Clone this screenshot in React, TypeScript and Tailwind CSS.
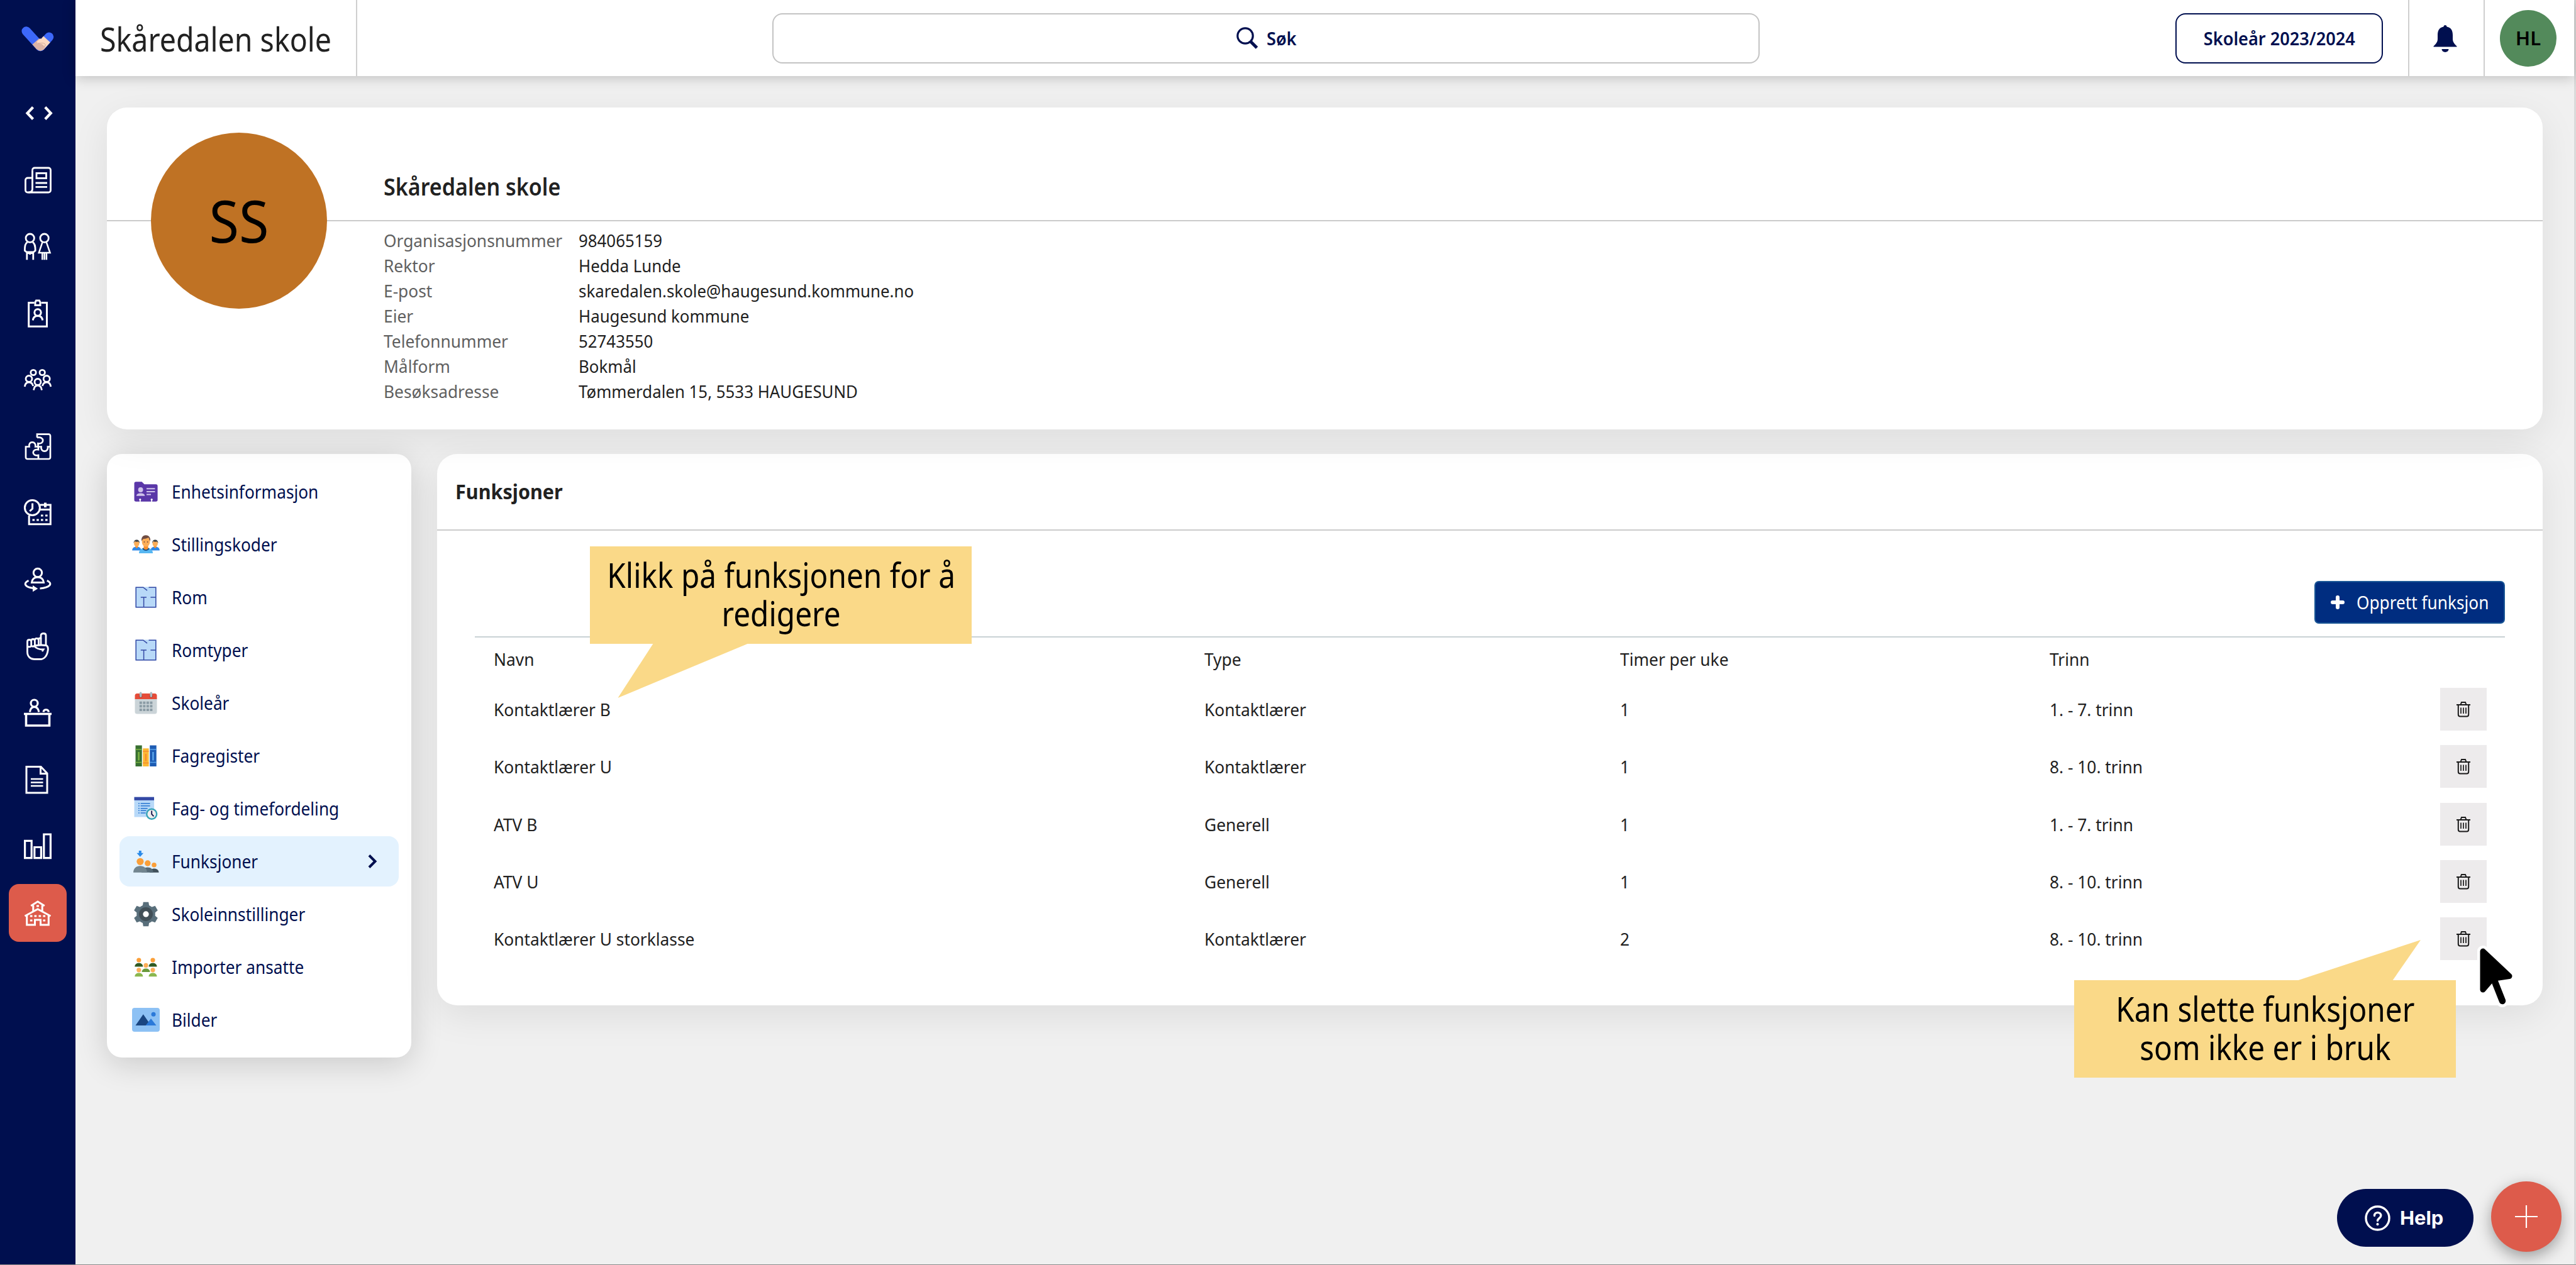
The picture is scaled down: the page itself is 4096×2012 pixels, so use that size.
import React, { ReactNode } from "react";

/* ---------- Sidebar icons (44 × 44 grid, white strokes) ---------- */

function NavSvg({ children, w = 3 }: { children: ReactNode; w?: number }) {
  return (
    <svg
      className="size-11 overflow-visible"
      viewBox="0 0 44 44"
      fill="none"
      stroke="#ffffff"
      strokeWidth={w}
    >
      {children}
    </svg>
  );
}

const navIcons: ReactNode[] = [
  <NavSvg w={4.2}>
    <path d="M14.5 12.5 5.5 22l9 9.500M33.800 12.500l9 9.500-9 9.500" />
  </NavSvg>,
  <NavSvg w={2.8}>
    <path d="M13.500 6.500a3.500 3.500 0 0 1 3.500-3.500h22a3.500 3.500 0 0 1 3.500 3.500v32a3.500 3.500 0 0 1-3.500 3.500H6a3.500 3.500 0 0 1-3.500-3.500V22.500A3.500 3.500 0 0 1 6 19h7.500" />
    <path d="M13.500 6.500v30q0 5.500-6 5.500" />
    <path d="M20 11.500h15.500v8H20zM18.500 27h18.500M18.500 33.300h18.500" />
  </NavSvg>,
  <NavSvg w={2.8}>
    <circle cx="9.700" cy="8.700" r="6.700" />
    <circle cx="32.600" cy="8.700" r="6.700" />
    <path d="M5.500 15.200C2 17.500 1.400 21 1.400 28.500l3 2.500h10.800l3-2.500c0-7.500-.7-11-4.200-13.300M4.800 31v12.300M14.800 31v12.300M9.700 34v1M3.500 32.500h12.500" />
    <path d="M29.500 15.200 23.800 32h17.800l-5.900-16.800M29.300 32v11.300M35.900 32v11.300M32.600 33v10.300" strokeWidth="2.500" />
  </NavSvg>,
  <NavSvg w={3}>
    <path d="M16.500 5.500h-8.800v37.800h28.800V5.500h-8.800" />
    <path d="M18 4.800l1.500-2.800h5l1.500 2.800v4.700h-8z" />
    <circle cx="22" cy="21" r="5.200" />
    <path d="M14.300 33.500c.5-5 3.500-7 7.700-7s7.200 2 7.700 7" />
  </NavSvg>,
  <NavSvg w={2.8}>
    <circle cx="15" cy="10.500" r="4.200" />
    <circle cx="29.200" cy="10.500" r="4.200" />
    <circle cx="8" cy="20.500" r="5" />
    <circle cx="36.200" cy="20.500" r="5" />
    <circle cx="22" cy="25.500" r="5" />
    <path d="M1.300 33c.7-5 3.200-7 6.700-7s5.800 2 6.700 6M42.800 33c-.7-5-3.200-7-6.700-7s-5.800 2-6.700 6M15.500 38.500c.7-5 3-7.500 6.500-7.500s5.800 2.500 6.500 7.500" />
  </NavSvg>,
  <NavSvg w={2.700}>
    <path d="M21 8V2.700h18.500a2.500 2.500 0 0 1 2.500 2.500v34.300a2.500 2.500 0 0 1-2.500 2.500H5.500A2.500 2.500 0 0 1 3 39.500V22.500h5.500c-2-9.500 11.500-9.500 9.800 0h4.700v4.700c-11-2-11 10.800 0 9v5.600" />
    <path d="M21 8c12-2.500 12 11.200 1.500 9.300v5.200h5c-1.500 9.500 12 9.500 10.500 0h4" />
  </NavSvg>,
  <NavSvg w={3}>
    <circle cx="13.400" cy="13.500" r="12" />
    <path d="M13.600 6.500v8.500l-4.300 4" />
    <path d="M26 9h16.300v30.800H8.200V26M26 16.500h16" />
    <path d="M34 5.500v7.500" strokeWidth="4" />
    <path d="M27 26h3.600M34 26h3.600M13.500 33h3.600M20.200 33h3.600M27 33h3.600M34 33h3.600" strokeWidth="3.200" />
  </NavSvg>,
  <NavSvg w={3}>
    <circle cx="22" cy="11" r="6.700" />
    <path d="M12.500 26.500c.8-6 4.500-8.500 9.500-8.500s8.700 2.500 9.500 8.500z" />
    <path d="M7.500 23.300C-2.500 28 2.500 34 15 35.500M36.800 23.300c10 5 4.500 11.200-11.300 12.700" />
    <path d="M14 31v10.300l8.200-5.100z" fill="#ffffff" stroke="none" />
  </NavSvg>,
  <NavSvg w={2.800}>
    <path d="M27 20V4.500C27 .5 35 .5 35 4.500V20c3 1.500 3.800 4 3.200 8C37 37.500 32 42.500 26 42.500h-8.500C10 42.500 5.500 38 5.500 31V14.500c0-4 6.200-4 6.200 0v6.300c0 2.700-6.200 2.700-6.200 0" />
    <path d="M11.700 13.500c0-4 5.700-4 5.700 0v6.500c0 2.500-4 3-5.700 1M17.400 12.500c0-4.200 6-4.200 6 0v6c0 2.500-5 3-6 1M23.400 10.500c1-2 3.600-2 3.600 0" />
    <path d="M35 20.500c-7-1-13-.5-18.500 1 3 4 8 5.500 14.500 5.500l-2 3" />
  </NavSvg>,
  <NavSvg w={3.200}>
    <circle cx="16.500" cy="6.500" r="5.500" />
    <path d="M9.500 20.500c.7-5.500 3.500-8 7-8s6.500 2.500 7.300 8M31 20.500c.8-5 7.500-5 8.500 0" />
    <path d="M0 23.500h44" strokeWidth="3.600" />
    <path d="M3.500 24v18h37V24" strokeWidth="3.600" />
  </NavSvg>,
  <NavSvg w={3}>
    <path d="M27 1.500H4v41.500h33V12z" />
    <path d="M26.500 2v10.500H37" />
    <path d="M11 21h19.500M11 26.500h19.500M11 32h19.500" strokeWidth="2.700" />
  </NavSvg>,
  <NavSvg w={3.200}>
    <path d="M1.600 13.300h10.600v27.400H1.600zM16.800 23.500h10.600v17.200H16.800zM31.800 3h10.600v37.700H31.800z" />
  </NavSvg>,
  <NavSvg w={3}>
    <path d="M11.200 10.800 22 4l10.800 6.800M14.800 10v9M29.200 10v9" />
    <path d="M1.500 27 22 16l20.500 11" />
    <path d="M4.700 26V41h12.800v-8h9v8h12.800V26" />
    <path d="M20 11h4M9.800 27h3.700M16.500 27h3.700M23.500 27h3.700M30.400 27h3.700M9.800 34h3.700M30.400 34h3.700" strokeWidth="3.200" />
  </NavSvg>,
];

function Logo() {
  return (
    <svg className="h-[40px] w-[54px]" viewBox="34 42 54 40" fill="none" strokeWidth="14.500">
      <path d="M41.700 49.500 64 74" stroke="#3d68fa" strokeLinecap="round" />
      <path d="M78 58.700 64.500 74" stroke="#3d68fa" strokeLinecap="round" />
      <path d="M74.500 62.500 64 74" stroke="#fdd9c2" />
      <path d="M56.800 66 64 74" stroke="#dcb4a6" />
      <circle cx="64.300" cy="73.700" r="7.300" fill="#dcb4a6" />
      <path d="M58 67l6-6 6 5 4 4-5 5.500c1.500-4-2-6-8-6.500-3 0-2-1.500-1-2z" fill="#fdd9c2" />
      <path d="M60 68c1 2 8-1 11 1.500s0 5-3 4.500" stroke="#b98d80" strokeWidth=".6" />
    </svg>
  );
}

/* ---------- Side menu icons (48 × 48 grid, colour) ---------- */

function MenuSvg({ children }: { children: ReactNode }) {
  return (
    <svg className="size-12" viewBox="0 0 48 48" fill="none">
      {children}
    </svg>
  );
}

const infoIcon = (
  <MenuSvg>
    <path d="M5.500 11A2.700 2.700 0 0 1 8.200 8.300h9.300l4 3.900h18.400a2.700 2.700 0 0 1 2.700 2.700V37a2.700 2.700 0 0 1-2.700 2.700H8.200A2.700 2.700 0 0 1 5.500 37z" fill="#5a37a8" />
    <circle cx="15.600" cy="21" r="3.900" fill="#cfc3ea" />
    <path d="M9 30.700c0-2.800 3-4.100 6.600-4.100s6.600 1.300 6.600 4.100z" fill="#cfc3ea" />
    <path d="M25 19.200h13.400M25 24h13.400M25 28.400h7" stroke="#cfc3ea" strokeWidth="2" />
    <path d="M14.800 37v3M33.200 37v3" stroke="#ffffff" strokeWidth="1.600" />
    <circle cx="14.800" cy="36.500" r="1.600" fill="#ffffff" />
    <circle cx="33.200" cy="36.500" r="1.600" fill="#ffffff" />
  </MenuSvg>
);

const staffIcon = (
  <MenuSvg>
    {[9.300, 38.700].map((x) => (
      <g key={x}>
        <path d={`M${x - 7.100} 33.500c0-4 2.500-5.500 7.100-6.200 4.600.7 7.100 2.200 7.100 6.200z`} fill="#2f88e8" />
        <path d={`M${x - 2} 24h4v4.500l-2 1.500-2-1.500z`} fill="#f98f2a" />
        <ellipse cx={x} cy="22.500" rx="4.200" ry="4.900" fill="#fcae58" />
        <path d={`M${x - 4.700} 22c-.6-7.500 10-7.500 9.400 0l-1.500-2.500c-2.500.3-5 .3-6.400-.8z`} fill="#3f4347" />
      </g>
    ))}
    <path d="M13 38c0-5.500 3.500-8 11-9.500 7.500 1.500 11 4 11 9.500z" fill="#57b7f2" />
    <path d="M18.500 30.300 24 28.500l5.500 1.800c-1.500 5-9.500 5-11 0z" fill="#1a4f86" />
    <path d="M20.500 24h7v6.500c-1.500 2.300-5.500 2.300-7 0z" fill="#f98f2a" />
    <ellipse cx="24" cy="19.500" rx="6.400" ry="8.200" fill="#fcae58" />
    <path d="M17 18.500C15.500 6 32.500 6.500 31 18.500l-1.600-2.300-1.200-3.200c-3 1.800-7 2-8.600 2.200z" fill="#6f4c42" />
    <circle cx="21.400" cy="20" r=".9" fill="#6f4c42" />
    <circle cx="26.600" cy="20" r=".9" fill="#6f4c42" />
  </MenuSvg>
);

const roomIcon = (
  <MenuSvg>
    <path d="M7.500 7.500h33v33h-33z" fill="#b8d9f8" />
    <path d="M28.500 8.200h11.300v31.600H8.200V8.200h11.500l6.300 5" stroke="#3449a5" strokeWidth="1.500" />
    <path d="M15.800 24H25M20.600 24v16M31.400 24H40" stroke="#3449a5" strokeWidth="1.500" />
  </MenuSvg>
);

const calendarIcon = (
  <MenuSvg>
    <path d="M6.500 17h35v21a3.500 3.500 0 0 1-3.500 3.500H10A3.500 3.500 0 0 1 6.500 38z" fill="#cbd4d8" />
    <path d="M10 9h28a3.500 3.500 0 0 1 3.500 3.500v5.600h-35v-5.600A3.500 3.500 0 0 1 10 9z" fill="#e54c39" />
    <circle cx="15.700" cy="13" r="2.800" fill="#b53a2c" />
    <circle cx="32.300" cy="13" r="2.800" fill="#b53a2c" />
    <path d="M15.700 8.300v5M32.300 8.300v5" stroke="#a9bac2" strokeWidth="3.600" strokeLinecap="round" />
    {[23.700, 29.300, 34.900].map((y) => (
      <path key={y} d={`M13.800 ${y}h20.600`} stroke="#8b9ca5" strokeWidth="4" strokeDasharray="4 1.530" />
    ))}
  </MenuSvg>
);

const booksIcon = (
  <MenuSvg>
    <path d="M7.500 7.500h10.200v33.500H7.500z" fill="#387031" />
    <path d="M7.500 14h10.200M7.500 34.500h10.200" stroke="#7cb342" strokeWidth="1.400" />
    <path d="M12.600 18v13.500" stroke="#7cb342" strokeWidth="2.600" />
    <path d="M19.200 12.300h9.400V41h-9.400z" fill="#fcb834" />
    <path d="M19.200 17h9.400M19.200 35.500h9.400" stroke="#f6892c" strokeWidth="1.600" />
    <path d="M23.900 21v11.500" stroke="#f6892c" strokeWidth="2.200" />
    <path d="M30.200 7.500h10.500v33.500H30.200z" fill="#1e5cb3" />
    <path d="M30.200 14h10.500M30.200 34.500h10.500" stroke="#5aa4ea" strokeWidth="1.400" />
    <path d="M35.400 18v13.500" stroke="#5aa4ea" strokeWidth="2.600" />
  </MenuSvg>
);

const timeIcon = (
  <MenuSvg>
    <path d="M5.500 5.700h31.600v31.800H5.500z" fill="#b8d9f8" />
    <path d="M5.500 5.700H37v5.200H5.500z" fill="#3449a5" />
    <path d="M15.600 16h15M15.600 19.800h15M15.600 23.700h11M15.600 27.300h9M15.600 31h8" stroke="#2474cf" strokeWidth="1.600" />
    <path d="M12 16h1.800M12 19.800h1.800M12 23.700h1.800M12 27.300h1.800M12 31h1.800" stroke="#2474cf" strokeWidth="1.600" />
    <circle cx="33.200" cy="32.700" r="8" fill="#eeeeee" stroke="#36a3b8" strokeWidth="2.400" />
    <path d="M33.200 27.500v5.300l3.200 3.600" stroke="#10104a" strokeWidth="1.800" />
  </MenuSvg>
);

const functionsIcon = (
  <MenuSvg>
    <path d="M12.800 7h4v3.800h3.400l-5.400 5.900-5.400-5.900h3.400z" fill="#2a8ae8" />
    <path d="M30 41.700c0-4 3-6.300 7.200-6.300s7.300 2.300 7.300 6.300z" fill="#40505a" />
    <path d="M17 41.700c0-5 4.500-8.300 9.700-8.300s9 3.300 9 8.300z" fill="#566a76" />
    <path d="M4 41.700c0-6.500 4.800-10.500 10.900-10.500s10.900 4 10.900 10.500z" fill="#72858f" />
    <circle cx="14.900" cy="24.300" r="5.600" fill="#fb9f38" />
    <circle cx="26.800" cy="27" r="4.700" fill="#fb9f38" />
    <circle cx="37" cy="29.800" r="3.800" fill="#fb9f38" />
  </MenuSvg>
);

const gearIcon = (
  <MenuSvg>
    {[0, 60, 120].map((a) => (
      <path
        key={a}
        d="M19.800 4.700h8.400l1.200 7.300v24l-1.200 7.300h-8.400L18.600 36V12z"
        transform={`rotate(${a} 24 24)`}
        fill="#596f7b"
      />
    ))}
    <circle cx="24" cy="24" r="14.800" fill="#596f7b" />
    <circle cx="24" cy="24" r="11" fill="#414f57" />
    <circle cx="24" cy="24" r="4.700" fill="#ffffff" />
  </MenuSvg>
);

const importIcon = (
  <MenuSvg>
    {[12.800, 35].map((x) => (
      <g key={x}>
        <circle cx={x} cy="13" r="3.600" fill="#fb9f38" />
        <path d={`M${x - 6.500} 23.400c0-3.600 3-5.600 6.500-5.600s6.500 2 6.500 5.600z`} fill="#2f5a22" />
        <circle cx={x} cy="28.800" r="3.600" fill="#fcae58" />
        <path d={`M${x - 6.500} 39.200c0-3.600 3-5.600 6.500-5.600s6.500 2 6.500 5.600z`} fill="#8ab74f" />
      </g>
    ))}
    <circle cx="24" cy="21.400" r="3.600" fill="#fcae58" />
    <path d="M17.500 32c0-3.600 3-5.600 6.500-5.600s6.500 2 6.500 5.600z" fill="#68993b" />
  </MenuSvg>
);

const pictureIcon = (
  <MenuSvg>
    <rect x="2" y="5" width="44" height="38" rx="4" fill="#8dc1f4" />
    <path d="M7.500 33 19.800 15.300 32 33z" fill="#1a4681" />
    <path d="M23.600 33 32 22l8.500 11z" fill="#2b79d9" />
    <circle cx="36" cy="15.300" r="3.500" fill="#2b79d9" />
  </MenuSvg>
);

const menu: { label: string; icon: ReactNode; active?: boolean }[] = [
  { label: "Enhetsinformasjon", icon: infoIcon },
  { label: "Stillingskoder", icon: staffIcon },
  { label: "Rom", icon: roomIcon },
  { label: "Romtyper", icon: roomIcon },
  { label: "Skoleår", icon: calendarIcon },
  { label: "Fagregister", icon: booksIcon },
  { label: "Fag- og timefordeling", icon: timeIcon },
  { label: "Funksjoner", icon: functionsIcon, active: true },
  { label: "Skoleinnstillinger", icon: gearIcon },
  { label: "Importer ansatte", icon: importIcon },
  { label: "Bilder", icon: pictureIcon },
];

const info: [string, string][] = [
  ["Organisasjonsnummer", "984065159"],
  ["Rektor", "Hedda Lunde"],
  ["E-post", "skaredalen.skole@haugesund.kommune.no"],
  ["Eier", "Haugesund kommune"],
  ["Telefonnummer", "52743550"],
  ["Målform", "Bokmål"],
  ["Besøksadresse", "Tømmerdalen 15, 5533 HAUGESUND"],
];

const rows: [string, string, string, string][] = [
  ["Kontaktlærer B", "Kontaktlærer", "1", "1. - 7. trinn"],
  ["Kontaktlærer U", "Kontaktlærer", "1", "8. - 10. trinn"],
  ["ATV B", "Generell", "1", "1. - 7. trinn"],
  ["ATV U", "Generell", "1", "8. - 10. trinn"],
  ["Kontaktlærer U storklasse", "Kontaktlærer", "2", "8. - 10. trinn"],
];

function Sidebar() {
  return (
    <aside className="flex w-[120px] shrink-0 flex-col items-center bg-[#000f4f]">
      <div className="flex h-[134px] w-full shrink-0 justify-center pt-[42px] pl-[2px]">
        <Logo />
      </div>
      <nav className="flex flex-col gap-[14px]">
        {navIcons.map((icon, i) => (
          <div
            key={i}
            className={`flex size-[92px] items-center justify-center rounded-[16px] ${
              i === navIcons.length - 1 ? "bg-[#dd5b4b]" : ""
            }`}
          >
            {icon}
          </div>
        ))}
      </nav>
    </aside>
  );
}

function Header() {
  return (
    <header className="relative z-10 flex h-[121px] shrink-0 items-center bg-white text-[#000f4f] shadow-[0_2px_20px_rgba(0,0,0,0.22)]">
      <div className="flex h-full w-[448px] items-center border-r-2 border-[#cfcfcf] pt-[2px] pl-[39px] text-[52px] text-[#212121]">
        <span className="inline-block origin-left scale-x-[0.894] whitespace-nowrap">Skåredalen skole</span>
      </div>
      <button className="ml-[660px] flex h-[80px] w-[1570px] items-center justify-center rounded-[16px] border-[2.5px] border-[#c4c4c4] pl-[4px] text-[28px] font-semibold">
        <svg className="size-[35px]" viewBox="0 0 35 35" fill="none" stroke="#000f4f">
          <circle cx="14" cy="14" r="12.200" strokeWidth="3.200" />
          <path d="M22.500 23 32.500 33" strokeWidth="5" />
        </svg>
        <span className="ml-[13px] inline-block origin-left scale-x-[0.97]">Søk</span>
      </button>
      <button className="ml-[661px] flex h-[80px] w-[330px] items-center justify-center rounded-[16px] border-[2.5px] border-[#000f4f] text-[28px] font-semibold">
        <span className="inline-block scale-x-[0.97] whitespace-nowrap">Skoleår 2023/2024</span>
      </button>
      <div className="ml-[40px] flex h-full w-[122px] items-center justify-center border-x-2 border-[#cfcfcf] pr-[4px]">
        <svg className="h-[44px] w-[38px]" viewBox="0 0 38 44" fill="#000f4f">
          <path d="M16.500 3.500a2.500 2.500 0 0 1 5 0C29 5 31 10 31 17v6c0 5 3 8 6.500 11.500v1H.5v-1C4 31 7 28 7 23v-6C7 10 9 5 16.500 3.500z" />
          <path d="M13.500 39h11a5.500 5 0 0 1-11 0z" />
        </svg>
      </div>
      <div className="ml-[24px] flex size-[90px] items-center justify-center rounded-full bg-[#538a5b] text-[31px] font-semibold text-black">
        HL
      </div>
    </header>
  );
}

function SchoolCard() {
  return (
    <section className="relative h-[512px] rounded-[32px] bg-white shadow-[0_16px_60px_rgba(0,0,0,0.08)]">
      <div className="flex h-[181px] items-end border-b-2 border-[#cbcbcb] pb-[28px] pl-[440px]">
        <h2 className="origin-left scale-x-[0.92] text-[37px] leading-[50px] font-semibold text-[#212121]">
          Skåredalen skole
        </h2>
      </div>
      <dl className="grid grid-cols-[309px_1fr] pt-[10px] pl-[440px] text-[28px] leading-[40px]">
        {info.map(([k, v]) => (
          <React.Fragment key={k}>
            <dt className="text-[#606060]">
              <span className="inline-block origin-left scale-x-[0.94] whitespace-nowrap">{k}</span>
            </dt>
            <dd className="pl-[1px] text-[#212121]">
              <span className="inline-block origin-left scale-x-[0.923] whitespace-nowrap">{v}</span>
            </dd>
          </React.Fragment>
        ))}
      </dl>
      <div className="absolute top-[39.500px] left-[70px] flex size-[280px] items-center justify-center rounded-full bg-[#bf7224] text-[93px] font-normal text-black">
        <span className="inline-block scale-x-[0.93]">SS</span>
      </div>
    </section>
  );
}

function SideMenu() {
  return (
    <nav className="flex h-[960px] w-[484px] shrink-0 flex-col gap-1 rounded-[24px] bg-white p-5 shadow-[0_10px_50px_rgba(0,0,0,0.16)]">
      {menu.map((m) => (
        <a
          key={m.label}
          className={`flex h-20 items-center rounded-[16px] pr-[34px] pl-[18px] text-[29px] text-[#000f4f] ${
            m.active ? "bg-[#e3f2fe]" : ""
          }`}
        >
          {m.icon}
          <span className="ml-[17px] inline-block origin-left scale-x-[0.905] whitespace-nowrap">{m.label}</span>
          {m.active && (
            <svg className="ml-auto h-[22px] w-[15px]" viewBox="0 0 15 22" fill="none" stroke="#000f4f" strokeWidth="4">
              <path d="M2 1.500 11.500 11 2 20.500" />
            </svg>
          )}
        </a>
      ))}
    </nav>
  );
}

function Trash() {
  return (
    <button className="flex h-[68px] w-[74px] items-center justify-center bg-[#edebec]">
      <svg className="h-[26px] w-[22px]" viewBox="0 0 22 26" fill="none" stroke="#1c1c1c" strokeWidth="2">
        <path d="M0 6h22M6.500 6l1.500-4h6l1.500 4M2.800 6v15.500q0 3 3 3h10.400q3 0 3-3V6" />
        <path d="M7 10.500v9.500M11 10.500v9.500M15 10.500v9.500" strokeWidth="1.700" />
      </svg>
    </button>
  );
}

const cols = "grid grid-cols-[1160px_661px_683px_621px_1fr] items-center";

function Cells({ values }: { values: string[] }) {
  return values.map((c, i) => (
    <div key={i} className={i === 0 ? "pl-[30px]" : ""}>
      <span className="inline-block origin-left scale-x-[0.94] whitespace-nowrap">{c}</span>
    </div>
  ));
}

function FunctionsCard() {
  return (
    <section className="h-[877px] flex-1 rounded-[32px] bg-white text-[#212121] shadow-[0_16px_60px_rgba(0,0,0,0.08)]">
      <div className="flex h-[122px] items-center border-b-2 border-[#cbcbcb] pl-[29px]">
        <h3 className="origin-left scale-x-[0.955] text-[32px] font-bold">Funksjoner</h3>
      </div>
      <div className="px-[60px] pt-[80px]">
        <div className="flex justify-end">
          <button className="flex h-[68px] w-[303px] items-center rounded-[7px] border-2 border-[#1b5796] bg-[#002d80] pl-[24px] text-[28.500px] text-white">
            <svg className="size-[22px]" viewBox="0 0 22 22" stroke="#ffffff" strokeWidth="6" strokeLinecap="round">
              <path d="M11 3v16M3 11h16" />
            </svg>
            <span className="ml-[19px] inline-block origin-left scale-x-[0.92] whitespace-nowrap">Opprett funksjon</span>
          </button>
        </div>
        <div className="mt-[20px] border-t-2 border-[#c9d2d4] text-[28px]">
          <div className={`${cols} h-[68px]`}>
            <Cells values={["Navn", "Type", "Timer per uke", "Trinn"]} />
          </div>
          {rows.map((r) => (
            <div key={r[0]} className={`${cols} h-[91.450px]`}>
              <Cells values={r} />
              <Trash />
            </div>
          ))}
        </div>
      </div>
    </section>
  );
}

function Callout({ className, tail, lines }: { className: string; tail: string; lines: string[] }) {
  return (
    <div className={`absolute z-20 flex h-[155px] w-[607px] flex-col items-center bg-[#fad988] text-[54px] leading-[61px] text-black ${className}`}>
      <svg className="absolute top-0 left-0 h-[155px] w-[607px] overflow-visible" viewBox="0 0 607 155" fill="#fad988">
        <path d={tail} />
      </svg>
      {lines.map((l) => (
        <span key={l} className="relative inline-block scale-x-[0.884] whitespace-nowrap">
          {l}
        </span>
      ))}
    </div>
  );
}

function Pointer() {
  return (
    <svg className="absolute top-[1500px] left-[3936px] z-30 h-[106px] w-[68px]" viewBox="0 0 68 106" strokeLinejoin="round" strokeLinecap="round">
      <g fill="#ffffff" stroke="#ffffff">
        <path d="M12 13v61l15-17 27-4z" strokeWidth="18" />
        <path d="M28 54l15 38" strokeWidth="20" />
      </g>
      <g fill="#000000" stroke="#000000">
        <path d="M12 13v61l15-17.500 27-4z" strokeWidth="9" />
        <path d="M28 54l15 38" strokeWidth="10.500" />
      </g>
    </svg>
  );
}

export default function App() {
  return (
    <div className="relative flex h-[2012px] w-[4096px] overflow-hidden bg-[#f0f0f0] font-['Noto_Sans',sans-serif]">
      <Sidebar />
      <div className="flex min-w-0 flex-1 flex-col border-r-[3px] border-[#dadada]">
        <Header />
        <main className="flex flex-col gap-[39px] pt-[50px] pr-[50px] pl-[50px]">
          <SchoolCard />
          <div className="flex items-start gap-[41px]">
            <SideMenu />
            <FunctionsCard />
          </div>
        </main>
      </div>

      <Callout
        className="top-[869px] left-[938px] pt-[15px] pl-[2px]"
        tail="M101 154 44.500 241 253 154z"
        lines={["Klikk på funksjonen for å", "redigere"]}
      />
      <Callout
        className="top-[1559px] left-[3298px] pt-[15px]"
        tail="M353.500 1 551-64 506 1z"
        lines={["Kan slette funksjoner", "som ikke er i bruk"]}
      />
      <Pointer />

      <button className="absolute top-[1891px] left-[3716px] flex h-[92px] w-[217px] items-center rounded-full bg-[#000f4f] pl-[44px] font-['Inter',sans-serif] text-[30px] font-bold text-white">
        <svg className="size-[41px]" viewBox="0 0 41 41" fill="none" stroke="#ffffff" strokeWidth="3.400" strokeLinecap="round">
          <circle cx="20.500" cy="20.500" r="18.500" />
          <path d="M15.500 16.500c0-6.500 10.300-6.500 10.300 0 0 4-5.300 4.200-5.300 8" />
          <path d="M20.500 30v.3" strokeWidth="4" />
        </svg>
        <span className="ml-[15px] inline-block origin-left scale-x-[1.030]">Help</span>
      </button>
      <button className="absolute top-[1879px] left-[3961px] flex size-[112px] items-center justify-center rounded-full bg-[#dd5b4b] shadow-[0_8px_24px_rgba(0,0,0,0.35)]">
        <svg className="size-[36px]" viewBox="0 0 36 36" stroke="#ffffff" strokeWidth="2.200">
          <path d="M18 0v36M0 18h36" />
        </svg>
      </button>
      <div className="absolute bottom-0 left-0 h-px w-full bg-[#8a8a8a]" />
    </div>
  );
}
